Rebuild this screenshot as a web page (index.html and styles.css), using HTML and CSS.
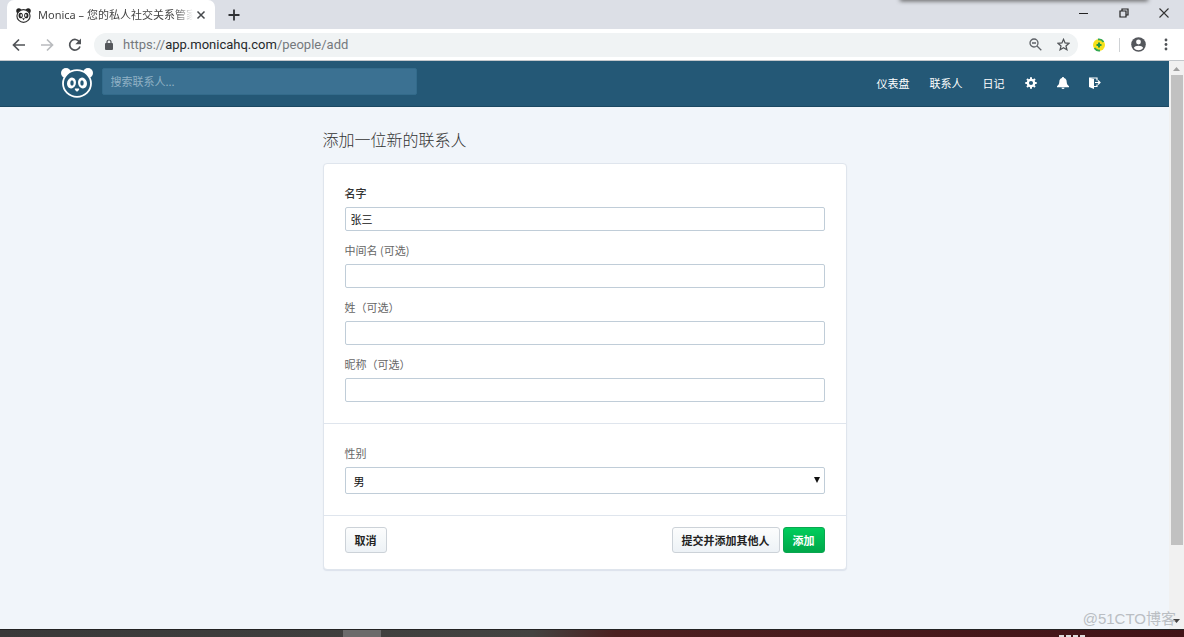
FILE: index.html
```html
<!DOCTYPE html>
<html lang="zh-CN">
<head>
<meta charset="utf-8">
<title>Monica – 您的私人社交关系管家</title>
<link rel="stylesheet" href="styles.css">
</head>
<body>
<div class="window">
  <div class="tabs">
    <div class="tab">
      <svg class="favicon" viewBox="0 0 32 32"><circle cx="6" cy="6" r="5.500" fill="#222"/><circle cx="26" cy="6" r="5.500" fill="#222"/><ellipse cx="16" cy="17" rx="14" ry="13.500" fill="#fff" stroke="#333" stroke-width="2.500"/><ellipse cx="10" cy="16" rx="4.500" ry="6" fill="#222"/><ellipse cx="22" cy="16" rx="4.500" ry="6" fill="#222"/><ellipse cx="11" cy="16" rx="1.500" ry="3" fill="#fff"/><ellipse cx="21" cy="16" rx="1.500" ry="3" fill="#fff"/><path d="M13 22h6l-3 4z" fill="#222"/></svg>
      <span class="tab-title">Monica – 您的私人社交关系管家</span>
      <button class="icon-button" aria-label="关闭标签页"><svg width="10" height="10" viewBox="0 0 10 10"><path d="M1.500 1.500l7 7M8.500 1.500l-7 7" stroke="#45484c" stroke-width="1.500"/></svg></button>
    </div>
    <button class="icon-button new-tab" aria-label="新标签页"><svg width="12" height="12" viewBox="0 0 12 12"><path d="M6 .5v11M.5 6h11" stroke="#303235" stroke-width="1.800"/></svg></button>
    <div class="shade"></div>
    <div class="window-controls">
      <button class="icon-button" aria-label="最小化"><svg width="10" height="10" viewBox="0 0 10 10"><path d="M0 5.500h9" stroke="#222"/></svg></button>
      <button class="icon-button" aria-label="还原"><svg width="10" height="10" viewBox="0 0 10 10" fill="none" stroke="#222" stroke-width="1.200"><path d="M1 3h6v6H1zM3 3V1h6v6H7"/></svg></button>
      <button class="icon-button" aria-label="关闭"><svg width="10" height="10" viewBox="0 0 10 10"><path d="M.5.500l9 9M9.500.500l-9 9" stroke="#333" stroke-width="1.100"/></svg></button>
    </div>
  </div>

  <div class="toolbar">
    <button class="icon-button" aria-label="后退"><svg width="14" height="14" viewBox="0 0 14 14" fill="none" stroke="#505357" stroke-width="1.700"><path d="M13 7H2M7 1.500L1.500 7 7 12.500"/></svg></button>
    <button class="icon-button" aria-label="前进"><svg width="14" height="14" viewBox="0 0 14 14" fill="none" stroke="#b9bbbe" stroke-width="1.700"><path d="M1 7h11M7 1.500L12.500 7 7 12.500"/></svg></button>
    <button class="icon-button" aria-label="重新加载"><svg width="14" height="14" viewBox="0 0 14 14"><path d="M11.500 4A5.300 5.300 0 1 0 12 8.500" fill="none" stroke="#505357" stroke-width="1.700"/><path d="M13 .5v5.700H7.300z" fill="#505357"/></svg></button>
    <div class="address">
      <svg width="8" height="11" viewBox="0 0 8 11"><path d="M2 5V3a2 2 0 0 1 4 0v2" fill="none" stroke="#55585c" stroke-width="1.200"/><rect y="4" width="8" height="7" rx="1" fill="#55585c"/></svg>
      <span class="url">https://<b>app.monicahq.com</b>/people/add</span>
      <button class="icon-button" aria-label="缩放"><svg width="13" height="13" viewBox="0 0 13 13" fill="none" stroke="#5f6368" stroke-width="1.300"><circle cx="5" cy="5" r="4"/><path d="M8 8l4.300 4.300M3 5h4"/></svg></button>
      <button class="icon-button" aria-label="收藏"><svg width="13" height="13" viewBox="0 0 24 24" fill="none" stroke="#505357" stroke-width="2.300"><path d="M12 2.500l2.900 6.700 7.200.6-5.500 4.800 1.700 7.100L12 17.900l-6.300 3.800 1.700-7.100L1.900 9.800l7.200-.6z"/></svg></button>
    </div>
    <button class="icon-button" aria-label="扩展程序"><svg width="14" height="14" viewBox="0 0 14 14"><circle cx="7" cy="7" r="6" fill="#f7e11b"/><path d="M6 1.500a5.500 5.500 0 0 1 5.500 2.500M8 12.500a5.500 5.500 0 0 1-5.500-2.500" fill="none" stroke="#35a853" stroke-width="1.800"/><path d="M7 4.500v5M4.500 7h5" stroke="#229346" stroke-width="2"/></svg></button>
    <span class="separator"></span>
    <button class="icon-button" aria-label="用户"><svg width="15" height="15" viewBox="0 0 15 15"><circle cx="7.500" cy="7.500" r="7.300" fill="#54575c"/><circle cx="7.500" cy="5" r="2.400" fill="#fff"/><path d="M2.800 11c1-3 8.400-3 9.400 0a6 6 0 0 1-9.400 0z" fill="#fff"/></svg></button>
    <button class="icon-button menu" aria-label="菜单"><svg width="4" height="13" viewBox="0 0 4 13" fill="#505357"><circle cx="2" cy="2" r="1.400"/><circle cx="2" cy="6.500" r="1.400"/><circle cx="2" cy="11" r="1.400"/></svg></button>
  </div>

  <div class="viewport">
    <div class="page">
      <header class="header">
        <div class="header-inner">
          <a class="logo" href="#" aria-label="Monica"><svg width="32" height="30" viewBox="0 0 32 30"><circle cx="5" cy="5" r="5" fill="#fff"/><circle cx="27" cy="5" r="5" fill="#fff"/><ellipse cx="16" cy="15.500" rx="14" ry="13.300" fill="#245876" stroke="#fff" stroke-width="1.800"/><ellipse cx="10.500" cy="15" rx="4.400" ry="5.500" fill="#fff" transform="rotate(15 10.500 15)"/><ellipse cx="21.500" cy="15" rx="4.400" ry="5.500" fill="#fff" transform="rotate(-15 21.500 15)"/><ellipse cx="11" cy="15" rx="1.700" ry="2.800" fill="#245876"/><ellipse cx="21" cy="15" rx="1.700" ry="2.800" fill="#245876"/><path d="M14 20.500h4q1 1-2 3.200-3-2.200-2-3.200z" fill="#fff"/></svg></a>
          <input class="search" type="search" aria-label="搜索联系人" placeholder="搜索联系人...">
          <nav class="nav">
            <a href="#">仪表盘</a>
            <a href="#">联系人</a>
            <a href="#">日记</a>
            <a href="#" aria-label="设置"><svg width="12" height="12" viewBox="0 0 12 12"><circle cx="6" cy="6" r="3.200" fill="none" stroke="#fff" stroke-width="2.300"/><path d="M6 .3v2.200M6 9.500v2.200M.3 6h2.200M9.500 6h2.200M2 2l1.400 1.400M8.600 8.600L10 10M10 2L8.600 3.400M3.400 8.600L2 10" stroke="#fff" stroke-width="2"/></svg></a>
            <a href="#" aria-label="通知"><svg width="12" height="12" viewBox="0 0 12 12" fill="#fff"><path d="M6 0c.7 0 1 .4 1 1 2 .5 2.600 2 2.700 4 .1 2 .8 3 2.300 4.300v.9H0v-.9C1.500 8 2.200 7 2.300 5 2.400 3 3 1.500 5 1c0-.6.300-1 1-1zM4.500 10.700h3a1.500 1.300 0 0 1-3 0z"/></svg></a>
            <a href="#" aria-label="退出"><svg width="12" height="12" viewBox="0 0 12 12"><path d="M0 .5L5 2v10L0 10z" fill="#fff"/><path d="M.5 1H8v2.500M5 9.500h3V7.500M6 5.500h5M9 3.500l2 2-2 2" fill="none" stroke="#fff" stroke-width="1.200"/></svg></a>
          </nav>
        </div>
      </header>

      <main class="content">
        <h1 class="title">添加一位新的联系人</h1>
        <form class="card">
          <div class="section">
            <div class="field"><label class="required" for="first">名字</label><input id="first" type="text" value="张三"></div>
            <div class="field"><label for="middle">中间名 (可选)</label><input id="middle" type="text"></div>
            <div class="field"><label for="last">姓（可选）</label><input id="last" type="text"></div>
            <div class="field"><label for="nick">昵称（可选）</label><input id="nick" type="text"></div>
          </div>
          <div class="section">
            <div class="field"><label for="gender">性别</label>
              <div class="select-wrap"><select id="gender"><option>男</option></select><svg class="arrow" width="6" height="6" viewBox="0 0 6 6"><path d="M0 0h6L3 6z" fill="#111"/></svg></div>
            </div>
          </div>
          <div class="actions">
            <button class="btn" type="button">取消</button>
            <div class="group">
              <button class="btn" type="button">提交并添加其他人</button>
              <button class="btn primary" type="button">添加</button>
            </div>
          </div>
        </form>
      </main>
    </div>
    <div class="scrollbar">
      <svg width="7" height="4" viewBox="0 0 7 4"><path d="M0 4L3.500 0 7 4z" fill="#a0a0a0"/></svg>
      <div class="track"><div class="thumb"></div></div>
      <svg width="7" height="4" viewBox="0 0 7 4"><path d="M0 0h7L3.500 4z" fill="#444"/></svg>
    </div>
    <div class="watermark">@51CTO博客</div>
  </div>
  <div class="taskbar"><span class="task"></span><span class="clock"><i></i><i></i><i></i><i></i></span></div>
</div>
</body>
</html>
```
FILE: styles.css
```css
* { box-sizing: border-box; }
body {
  margin: 0;
  font: 11px/16px "Noto Sans CJK SC", sans-serif;
  color: #444;
}
button, input, select { font: inherit; color: inherit; }
svg { display: block; flex: none; }
.window { display: flex; flex-direction: column; height: 100vh; overflow: hidden; }
.icon-button { display: flex; padding: 0; border: 0; background: none; }

.tabs { position: relative; display: flex; align-items: center; height: 29px; padding-left: 7px; background: #dcdfe6; }
.tab {
  display: flex; align-items: center; align-self: stretch; gap: 7px;
  width: 208px; padding: 1px 9px 0; border-radius: 7px 7px 0 0; background: #fff;
}
.favicon { width: 15px; height: 15px; }
.tab-title {
  flex: 1; margin-right: -4px; overflow: hidden; white-space: nowrap;
  font-family: "Noto Sans", "Noto Sans CJK SC", sans-serif;
  -webkit-mask-image: linear-gradient(90deg, #000 88%, transparent);
  mask-image: linear-gradient(90deg, #000 88%, transparent);
}
.new-tab { margin-left: 13px; }
.shade { position: absolute; top: -4px; right: 36px; width: 248px; height: 4px; box-shadow: 0 1px 4px #555; }
.window-controls { display: flex; gap: 30px; margin-left: auto; padding: 0 15px 4px 0; }

.toolbar { display: flex; align-items: center; gap: 14px; height: 32px; padding: 0 16px 0 12px; border-bottom: 1px solid #c4c8cc; background: #fff; }
.address {
  display: flex; align-items: center; flex: 1; gap: 15px; height: 24px;
  margin-left: -2px; padding: 0 8px 0 11px; border-radius: 12px; background: #f0f3f4;
}
.url { flex: 1; margin-left: -5px; font: 13px/18px Roboto, sans-serif; color: #75797d; }
.url b { font-weight: 400; color: #25282b; }
.separator { width: 1px; height: 14px; margin: 0 -3px 0 -1px; background: #cfd2d5; }
.menu { margin-left: 4px; }

.viewport { position: relative; display: flex; flex: 1; min-height: 0; }
.page { flex: 1; background: #f1f5fa; }
.header { height: 46px; border-bottom: 1px solid #1b4862; background: #245876; }
.header-inner { display: flex; align-items: center; gap: 9px; max-width: 1048px; height: 44px; margin: 0 auto; }
.search { width: 315px; height: 27px; margin-bottom: 4px; padding: 0 8px; border: 1px solid #336b8b; border-radius: 2px; background: #3b7192; }
.search::placeholder { color: #91b2c5; opacity: 1; }
.nav { display: flex; align-items: center; gap: 20px; margin-left: auto; padding-right: 8px; }
.nav a { color: #fff; text-decoration: none; }

.content { max-width: 524px; margin: 0 auto; padding-top: 20px; }
.title { margin: 0 0 12px; font-size: 16px; line-height: 24px; font-weight: 300; color: #333; }
.card { border: 1px solid #dfe5ed; border-radius: 4px; background: #fff; box-shadow: 0 1px 1px #dce2eb; }
.section { display: flex; flex-direction: column; gap: 11px; padding: 21px; border-bottom: 1px solid #dfe5ed; }
.field { display: flex; flex-direction: column; gap: 6px; }
.field label { color: #666; }
.field .required { color: #333; font-weight: 500; }
.field input, .field select { width: 100%; height: 24px; padding: 0 5px; border: 1px solid #c0cdd8; border-radius: 2px; background: #fff; color: #111; }
.select-wrap { position: relative; }
.field select { display: block; height: 27px; padding: 0 8px; appearance: none; }
.arrow { position: absolute; top: 10px; right: 5px; pointer-events: none; }
.actions { display: flex; justify-content: space-between; padding: 11px 21px 16px; }
.group { display: flex; gap: 3px; }
.btn { height: 26px; padding: 0 9px; border: 1px solid #ccd2d8; border-radius: 3px; background: linear-gradient(#fcfdfd, #edf2f6); color: #222; font-weight: 700; }
.btn.primary { border-color: #0aa650; background: linear-gradient(#00cd5c, #00a84a); color: #fff; }

.scrollbar { display: flex; flex-direction: column; align-items: center; gap: 4px; width: 15px; padding: 6px 1px; background: #f1f1f1; }
.track { flex: 1; width: 12px; }
.thumb { height: 87%; background: #c1c1c1; }
.watermark { position: absolute; right: 8px; bottom: 0; font: 15px/20px "Liberation Sans", "Noto Sans CJK SC", sans-serif; color: #babec3; }
.taskbar {
  display: flex; justify-content: space-between; height: 8px; padding: 0 99px 0 29%;
  border-top: 1px solid #222; background: linear-gradient(90deg, #393939, #434341 45%, #4c2020 52%, #421317);
}
.task { width: 38px; background: #6b6b6b; }
.clock { display: flex; align-items: flex-end; gap: 2px; }
.clock i { width: 5px; height: 2px; background: #ddd; }
```
